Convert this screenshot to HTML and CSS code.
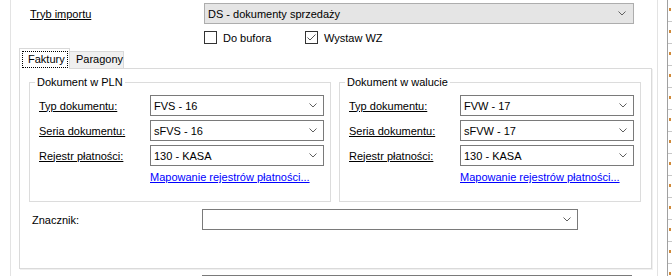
FILE: index.html
```html
<!DOCTYPE html>
<html lang="pl">
<head>
  <meta charset="UTF-8" />
  <title>Import dokumentów</title>
  <link rel="stylesheet" href="styles.css">
</head>
<body>
  <div class="window">
    <div class="panel">
      <!-- Tryb importu -->
      <div class="top-row">
        <span class="lbl u">Tryb importu</span>
        <div class="combo gray">
          <span class="val">DS - dokumenty sprzedaży</span>
          <svg class="chev" width="8" height="5" viewBox="0 0 8 5"><polyline points="0.5,0.5 4,4 7.5,0.5"/></svg>
        </div>
      </div>
      <div class="checks">
        <label class="chk first"><span class="box"></span>Do bufora</label>
        <label class="chk"><span class="box"><svg width="11" height="11" viewBox="0 0 11 11"><polyline points="1.5,5.5 4,8 9.5,2.5"/></svg></span>Wystaw WZ</label>
      </div>

      <!-- Zakładki -->
      <div class="tabs">
        <div class="tab-head">
          <div class="tab active"><span class="focus">Faktury</span></div>
          <div class="tab">Paragony</div>
        </div>
        <div class="tab-page">
          <div class="groups">
            <fieldset class="group">
              <legend>Dokument w PLN</legend>
              <div class="field">
                <span class="lbl u">Typ dokumentu:</span>
                <div class="combo"><span class="val">FVS - 16</span><svg class="chev" width="8" height="5" viewBox="0 0 8 5"><polyline points="0.5,0.5 4,4 7.5,0.5"/></svg></div>
              </div>
              <div class="field">
                <span class="lbl u">Seria dokumentu:</span>
                <div class="combo"><span class="val">sFVS - 16</span><svg class="chev" width="8" height="5" viewBox="0 0 8 5"><polyline points="0.5,0.5 4,4 7.5,0.5"/></svg></div>
              </div>
              <div class="field">
                <span class="lbl u">Rejestr płatności:</span>
                <div class="combo"><span class="val">130 - KASA</span><svg class="chev" width="8" height="5" viewBox="0 0 8 5"><polyline points="0.5,0.5 4,4 7.5,0.5"/></svg></div>
              </div>
              <a class="link" href="#">Mapowanie rejestrów płatności...</a>
            </fieldset>
            <fieldset class="group">
              <legend>Dokument w walucie</legend>
              <div class="field">
                <span class="lbl u">Typ dokumentu:</span>
                <div class="combo"><span class="val">FVW - 17</span><svg class="chev" width="8" height="5" viewBox="0 0 8 5"><polyline points="0.5,0.5 4,4 7.5,0.5"/></svg></div>
              </div>
              <div class="field">
                <span class="lbl u">Seria dokumentu:</span>
                <div class="combo"><span class="val">sFVW - 17</span><svg class="chev" width="8" height="5" viewBox="0 0 8 5"><polyline points="0.5,0.5 4,4 7.5,0.5"/></svg></div>
              </div>
              <div class="field">
                <span class="lbl u">Rejestr płatności:</span>
                <div class="combo"><span class="val">130 - KASA</span><svg class="chev" width="8" height="5" viewBox="0 0 8 5"><polyline points="0.5,0.5 4,4 7.5,0.5"/></svg></div>
              </div>
              <a class="link" href="#">Mapowanie rejestrów płatności...</a>
            </fieldset>
          </div>
          <div class="marker">
            <span class="lbl">Znacznik:</span>
            <div class="combo wide"><span class="val"></span><svg class="chev" width="8" height="5" viewBox="0 0 8 5"><polyline points="0.5,0.5 4,4 7.5,0.5"/></svg></div>
          </div>
        </div>
      </div>

      <div class="combo bottom"></div>
    </div>
    <div class="gap"></div>
    <div class="side"></div>
  </div>
</body>
</html>
```

FILE: styles.css
```css
/* RESET */
* { box-sizing: border-box; }
body {
  margin: 0;
  font: 11px "Liberation Sans", Arial, sans-serif;
  color: #000;
  background: #fff;
}

/* WINDOW */
.window { display: flex; height: 276px; overflow: hidden; }
.panel {
  margin-left: 10px;
  width: 648px;
  flex: none;
  border-left: 1px solid #e3e3e3;
  border-right: 1px solid #e3e3e3;
  padding-left: 8px;
}
.gap { width: 9px; flex: none; }
.side {
  width: 5px;
  flex: none;
  border-left: 1px solid #a0a0a0;
  background:
    repeating-linear-gradient(to bottom, transparent 0 8px, #d08a3a 8px 11px, transparent 11px 22px) 1px 0 / 2px 100% no-repeat,
    repeating-linear-gradient(to bottom, #fff 0 21px, #c8c8c8 21px 22px);
}

.lbl { white-space: nowrap; }
.u { text-decoration: underline; }

/* COMBOS */
.combo {
  display: flex;
  align-items: center;
  height: 21px;
  border: 1px solid #7a7a7a;
  background: #fff;
  padding-left: 3px;
  flex: none;
}
.combo .val { flex: 1; white-space: nowrap; }
.chev { margin-right: 6px; flex: none; }
.chev polyline { fill: none; stroke: #606060; stroke-width: 1; }
.combo.gray { width: 430px; background: #e5e5e5; border-color: #adadad; }
.combo.gray .chev { margin-right: 7px; }

/* TOP ROW */
.top-row { display: flex; align-items: center; margin-top: 3px; }
.top-row .lbl { width: 185px; padding-left: 11px; }

/* CHECKBOXES */
.checks { display: flex; margin-top: 7px; padding-left: 185px; height: 13px; }
.chk { display: flex; align-items: center; gap: 6px; }
.chk.first { width: 101px; }
.box {
  width: 13px;
  height: 13px;
  border: 1px solid #333;
  background: #fff;
  display: flex;
}
.box polyline { fill: none; stroke: #555; stroke-width: 1; }

/* TABS */
.tabs { margin-top: 4px; width: 633px; }
.tab-head { display: flex; align-items: flex-end; height: 20px; }
.tab {
  height: 17px;
  border: 1px solid #d9d9d9;
  border-bottom: none;
  background: #f0f0f0;
  padding: 1px 0 0 6px;
  width: 55px;
  margin-left: -1px;
}
.tab.active {
  position: relative;
  z-index: 1;
  height: 21px;
  margin-bottom: -1px;
  margin-left: 0;
  width: 51px;
  background: #fff;
  padding: 2px 0 0 2px;
}
.focus { display: inline-block; border: 1px dotted #000; padding: 0 2px 1px 5px; line-height: 14px; }
.tab-page {
  border: 1px solid #dadada;
  box-shadow: 1px 1px 0 #f0f0f0;
  height: 201px;
  padding: 7px 0 0 9px;
}

/* GROUP BOXES */
.groups { display: flex; gap: 8px; }
.group {
  margin: 0;
  min-width: 0;
  width: 302px;
  border: 1px solid #dcdcdc;
  padding: 6px 6px 17px 9px;
}
.group legend { padding: 0 2px; margin-left: -4px; line-height: 13px; }
.field { display: flex; align-items: center; margin-bottom: 4px; }
.field .lbl { width: 111px; }
.field .combo { width: 174px; }
.link {
  display: block;
  margin: 5px 0 0 111px;
  color: #0000ff;
  line-height: 13px;
}

/* ZNACZNIK */
.marker { display: flex; align-items: center; margin-top: 7px; padding-left: 3px; }
.marker .lbl { width: 170px; }
.combo.wide { width: 376px; }

.combo.bottom { margin: 6px 0 0 183px; width: 430px; }
```
